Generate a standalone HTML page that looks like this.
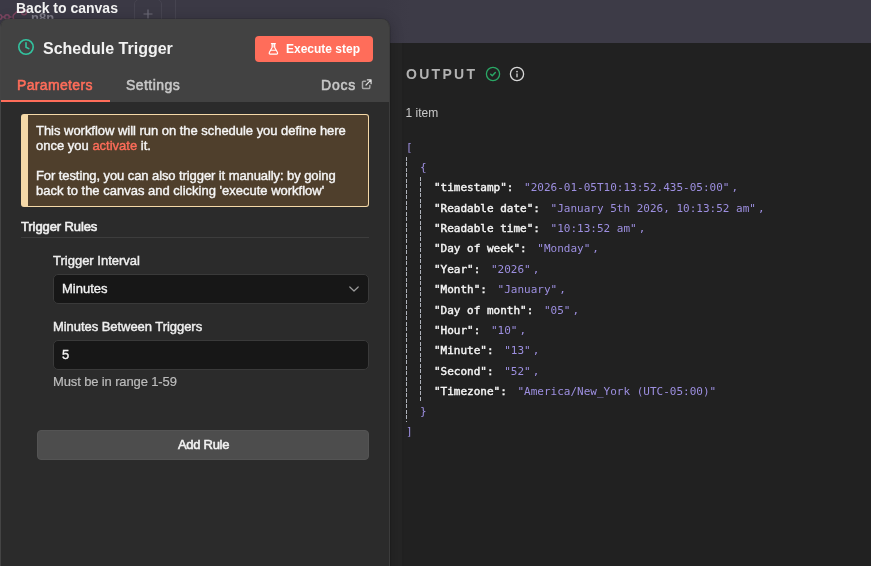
<!DOCTYPE html>
<html lang="en">
<head>
<meta charset="utf-8">
<title>Schedule Trigger</title>
<style>
*{box-sizing:border-box;margin:0;padding:0}
html,body{width:871px;height:566px;overflow:hidden;background:#222222}
body{position:relative;font-family:"Liberation Sans",sans-serif;color:#f0f0f0;-webkit-font-smoothing:antialiased}
.abs{position:absolute;white-space:nowrap}
div.abs[id]:not(#items),div.j,div.ct,div.lbl,div.inptxt{will-change:transform}
#topbg{left:0;top:0;width:871px;height:43px;background:linear-gradient(90deg,#3b3945 0px,#3b3945 384px,#3d3b47 410px)}
#plusbtn{left:134px;top:-1px;width:28px;height:30px;border:1px solid #464450;border-radius:5px;background:transparent}
#plus{left:142px;top:4px;font-size:16px;color:#7a7886;line-height:20px}
#vline{left:175px;top:0;width:1px;height:19px;background:#464450}
#n8n{left:31px;top:10px;font-size:13px;font-weight:bold;color:#807e8a;line-height:16px}
#back{left:16px;top:-2px;font-size:14px;font-weight:bold;line-height:20px;color:#f2f2f2}
#right{left:390px;top:43px;width:481px;height:523px;background:linear-gradient(90deg,#252525 0px,#252525 12px,#212121 12px)}
#left{left:0;top:19px;width:390px;height:560px;background:#2b2b2b;border-radius:8px 8px 0 0;border-right:1px solid #3c3c3c;border-left:1px solid #444444;overflow:hidden}
#lshadow{left:0;top:19px;width:390px;height:560px;border-radius:9px 9px 0 0;box-shadow:0 0 0 1px rgba(0,0,0,0.10),0 2px 14px rgba(0,0,0,0.22)}
#lhead{left:-1px;top:0;width:391px;height:83px;background:#424242}
#title{left:43px;top:39px;font-size:16px;font-weight:bold;line-height:20px;color:#f2f2f2}
#exec{left:255px;top:36px;width:118px;height:26px;background:#ff6d5a;border-radius:4px}
#exectxt{left:286px;top:42px;font-size:12px;font-weight:bold;line-height:14px;color:#fff}
#tabp{left:17px;top:76px;font-size:14px;letter-spacing:0.35px;line-height:18px;color:#ff6d5a;-webkit-text-stroke:0.55px #ff6d5a}
#tabs{left:126px;top:76px;font-size:14px;letter-spacing:0.45px;line-height:18px;color:#c8c8c8;-webkit-text-stroke:0.55px #c8c8c8}
#docs{left:321px;top:76px;font-size:14px;letter-spacing:0.8px;line-height:18px;color:#c8c8c8;-webkit-text-stroke:0.55px #c8c8c8}
#tabline{left:1px;top:100px;width:109px;height:2px;background:#ff6d5a}
#callout{left:21px;top:114px;width:348px;height:93px;background:#4f3f2c;border:1px solid #f5d9a8;border-left-width:7px;border-radius:3px}
.ct{font-size:13px;line-height:15px;color:#f5f5f5;-webkit-text-stroke:0.4px #f5f5f5}
.ct b{font-weight:normal;color:#ff6d5a;-webkit-text-stroke:0.4px #ff6d5a}
#sec{left:21px;top:219px;font-size:13px;letter-spacing:-0.1px;line-height:16px;color:#f0f0f0;-webkit-text-stroke:0.6px #f0f0f0}
#secline{left:21px;top:237px;width:348px;height:1px;background:#3d3d3d}
.lbl{font-size:13px;line-height:16px;color:#eeeeee;-webkit-text-stroke:0.45px #eeeeee}
.inp{left:53px;width:316px;height:30px;background:#171717;border:1px solid #3a3a3a;border-radius:5px}
.inptxt{font-size:13px;line-height:16px;color:#f2f2f2;-webkit-text-stroke:0.35px #f2f2f2}
#hint{left:53px;top:374px;font-size:13px;letter-spacing:-0.13px;line-height:16px;color:#bcbcbc;-webkit-text-stroke:0.2px #bcbcbc}
#addrule{left:37px;top:430px;width:332px;height:29.5px;background:#4d4d4d;border-radius:4px;border:1px solid #545454}
#addtxt{left:177.5px;top:437px;font-size:13px;letter-spacing:-0.3px;line-height:16px;color:#f2f2f2;-webkit-text-stroke:0.55px #f2f2f2}
#out{left:406px;top:65px;font-size:14px;font-weight:bold;line-height:18px;letter-spacing:2.3px;color:#b2b2b2}
#items{left:405.5px;top:105px;font-size:12px;line-height:16px;color:#c9c9c9}
.j{font-family:"DejaVu Sans Mono","Liberation Mono",monospace;font-size:11px;line-height:20px;color:#9d8fe0}
.j .k{color:#f4f4f4;font-weight:normal;-webkit-text-stroke:0.42px #f4f4f4}
.j .v{margin-left:4px}
.j i{font-style:normal;margin-left:2px}
.dash{width:1px;background:repeating-linear-gradient(180deg,#aeb2ba 0px,#aeb2ba 3.7px,transparent 3.7px,transparent 5.5px)}
</style>
</head>
<body>
<div id="topbg" class="abs"></div>
<div id="plusbtn" class="abs"></div>
<svg class="abs" style="left:143px;top:9px" width="10" height="10" viewBox="0 0 10 10"><path d="M5 0.500V9.500M0.500 5H9.500" stroke="#6c6a77" stroke-width="1.200" fill="none"/></svg>
<div id="vline" class="abs"></div>
<svg class="abs" style="left:0;top:8px" width="30" height="14" viewBox="0 0 30 14"><g fill="none" stroke="#7a4560" stroke-width="1.500"><circle cx="-0.500" cy="9" r="2.300"/><circle cx="7" cy="9" r="2.300"/><path d="M1.800 9h2.900M9.300 9h2.200M14.500 11.500c-2-0.500-2-4.500 0-5.500c2-1 1.500-2.500 3-2.500h4"/><circle cx="24" cy="4.500" r="2.300"/></g></svg>
<div id="n8n" class="abs">n8n</div>

<div id="right" class="abs"></div>

<div id="lshadow" class="abs"></div>
<div id="left" class="abs"><div id="lhead" class="abs"></div></div>
<div id="back" class="abs">Back to canvas</div>

<svg class="abs" style="left:17px;top:38px" width="18" height="18" viewBox="0 0 18 18"><circle cx="9" cy="9" r="7.2" fill="none" stroke="#33c4a0" stroke-width="1.6"/><path d="M9 4.8V9.2L11.8 10.6" fill="none" stroke="#33c4a0" stroke-width="1.6" stroke-linecap="round" stroke-linejoin="round"/></svg>
<div id="title" class="abs">Schedule Trigger</div>
<div id="exec" class="abs"></div>
<svg class="abs" style="left:267.300px;top:42px" width="13" height="14" viewBox="0 0 13 14"><rect x="5.100" y="1.600" width="2.600" height="3.800" fill="#fff" opacity="0.550"/><path d="M5.100 1.600V5.400L2.300 10.600a1 1 0 0 0 0.900 1.500h6.400a1 1 0 0 0 0.900-1.500L7.700 5.400V1.600M4.400 1.600h4M3.700 8.200h5.400" fill="none" stroke="#fff" stroke-width="1.150" stroke-linecap="round" stroke-linejoin="round"/></svg>
<div id="exectxt" class="abs">Execute step</div>
<div id="tabp" class="abs">Parameters</div>
<div id="tabs" class="abs">Settings</div>
<div id="docs" class="abs">Docs</div>
<svg class="abs" style="left:361px;top:79px" width="11" height="11" viewBox="0 0 11 11"><path d="M4.500 2.200H2.600a1.100 1.100 0 0 0-1.100 1.100V8.400a1.100 1.100 0 0 0 1.100 1.100h5.100A1.100 1.100 0 0 0 8.800 8.400V6.500" fill="none" stroke="#a8a8a8" stroke-width="1.500" stroke-linecap="round" stroke-linejoin="round"/><path d="M6.300 0.900h3.800v3.800M9.800 1.200L5 6" fill="none" stroke="#dedede" stroke-width="1.200" stroke-linecap="round" stroke-linejoin="round"/></svg>
<div id="tabline" class="abs"></div>

<div id="callout" class="abs"></div>
<div id="c1" class="abs ct" style="left:36px;top:123px;letter-spacing:-0.03px">This workflow will run on the schedule you define here</div>
<div id="c2" class="abs ct" style="left:36px;top:138px">once you <b>activate</b> it.</div>
<div id="c3" class="abs ct" style="left:36px;top:168px;letter-spacing:-0.085px">For testing, you can also trigger it manually: by going</div>
<div id="c4" class="abs ct" style="left:36px;top:183px">back to the canvas and clicking 'execute workflow'</div>

<div id="sec" class="abs">Trigger Rules</div>
<div id="secline" class="abs"></div>

<div id="l1" class="abs lbl" style="left:53px;top:253px">Trigger Interval</div>
<div class="abs inp" style="top:274px"></div>
<div id="i1" class="abs inptxt" style="left:62px;top:281px">Minutes</div>
<svg class="abs" style="left:347px;top:284px" width="14" height="10" viewBox="0 0 14 10"><path d="M2.800 3L7 7L11.200 3" fill="none" stroke="#9c9c9c" stroke-width="1.200" stroke-linecap="round" stroke-linejoin="round"/></svg>

<div id="l2" class="abs lbl" style="left:53px;top:319px;letter-spacing:-0.05px">Minutes Between Triggers</div>
<div class="abs inp" style="top:340px"></div>
<div id="i2" class="abs inptxt" style="left:62px;top:347px">5</div>
<div id="hint" class="abs">Must be in range 1-59</div>

<div id="addrule" class="abs"></div>
<div id="addtxt" class="abs">Add Rule</div>

<div id="out" class="abs">OUTPUT</div>
<svg class="abs" style="left:485px;top:66px" width="16" height="16" viewBox="0 0 16 16"><circle cx="8" cy="8" r="6.600" fill="none" stroke="#2aa866" stroke-width="1.300"/><path d="M5.700 8.200L7.300 9.700L10.300 6.500" fill="none" stroke="#2aa866" stroke-width="1.500" stroke-linecap="round" stroke-linejoin="round"/></svg>
<svg class="abs" style="left:509px;top:66px" width="16" height="16" viewBox="0 0 16 16"><circle cx="8" cy="8" r="6.600" fill="none" stroke="#d8d8d8" stroke-width="1.300"/><path d="M8 7.900V10.800" fill="none" stroke="#d8d8d8" stroke-width="1.300" stroke-linecap="round"/><circle cx="8" cy="5.600" r="0.850" fill="#d8d8d8"/></svg>
<div id="items" class="abs">1 item</div>

<div class="abs dash" style="left:406px;top:157px;height:265px"></div>
<div class="abs dash" style="left:420px;top:177px;height:225px"></div>
<div class="abs j" style="left:406px;top:138px">[</div>
<div class="abs j" style="left:420px;top:158px">{</div>
<div id="j1" class="abs j" style="left:434px;top:178px"><span class="k">"timestamp":</span> <span class="v">"2026-01-05T10:13:52.435-05:00"<i>,</i></span></div>
<div class="abs j" style="left:434px;top:199px"><span class="k">"Readable date":</span> <span class="v">"January 5th 2026, 10:13:52 am"<i>,</i></span></div>
<div class="abs j" style="left:434px;top:219px"><span class="k">"Readable time":</span> <span class="v">"10:13:52 am"<i>,</i></span></div>
<div class="abs j" style="left:434px;top:239px"><span class="k">"Day of week":</span> <span class="v">"Monday"<i>,</i></span></div>
<div class="abs j" style="left:434px;top:260px"><span class="k">"Year":</span> <span class="v">"2026"<i>,</i></span></div>
<div class="abs j" style="left:434px;top:280px"><span class="k">"Month":</span> <span class="v">"January"<i>,</i></span></div>
<div class="abs j" style="left:434px;top:301px"><span class="k">"Day of month":</span> <span class="v">"05"<i>,</i></span></div>
<div class="abs j" style="left:434px;top:321px"><span class="k">"Hour":</span> <span class="v">"10"<i>,</i></span></div>
<div class="abs j" style="left:434px;top:341px"><span class="k">"Minute":</span> <span class="v">"13"<i>,</i></span></div>
<div class="abs j" style="left:434px;top:362px"><span class="k">"Second":</span> <span class="v">"52"<i>,</i></span></div>
<div id="j11" class="abs j" style="left:434px;top:382px"><span class="k">"Timezone":</span> <span class="v">"America/New_York (UTC-05:00)"</span></div>
<div class="abs j" style="left:420px;top:402px">}</div>
<div class="abs j" style="left:406px;top:422px">]</div>
</body>
</html>
